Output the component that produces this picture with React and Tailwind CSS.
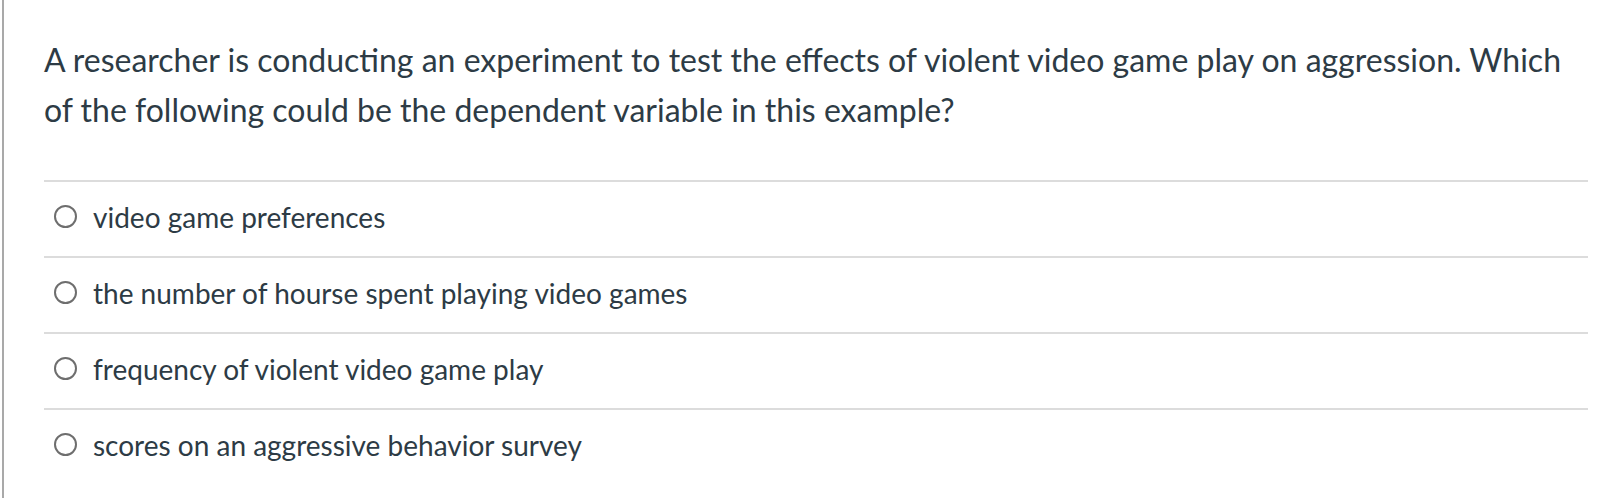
const answers = [
  "video game preferences",
  "the number of hourse spent playing video games",
  "frequency of violent video game play",
  "scores on an aggressive behavior survey",
];

export default function App() {
  return (
    <div className="min-h-[498px] bg-white font-['Lato','Liberation_Sans',sans-serif] text-[#2d3b45]">
      <div className="ml-[2px] min-h-[498px] border-l-2 border-[#a9a9a9] pl-[40px] pr-[12px]">
        {/* question */}
        <p className="pt-[35px] text-[32px] leading-[50px]">
          A researcher is conducting an experiment to test the effects of violent video game play on aggression. Which of the following could be the dependent variable in this example?
        </p>

        {/* answers */}
        <div className="mt-[45px]">
          {answers.map((a) => (
            <label key={a} className="flex h-[76px] items-center border-t-2 border-[#dcdcdc] pb-[5px] pl-[10px]">
              <span className="h-[23px] w-[23px] shrink-0 rounded-full border-2 border-[#6e6e6e]"></span>
              <span className="ml-[16px] text-[28px]">{a}</span>
            </label>
          ))}
        </div>
      </div>
    </div>
  );
}
